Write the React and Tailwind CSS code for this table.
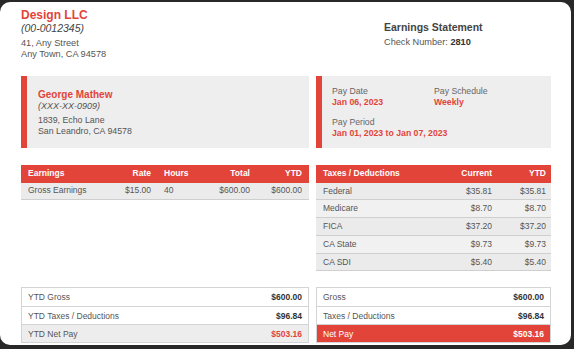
import React from 'react';

const earnings = [{ label: 'Gross Earnings', rate: '$15.00', hours: '40', total: '$600.00', ytd: '$600.00' }];

const taxes = [
  { label: 'Federal', current: '$35.81', ytd: '$35.81' },
  { label: 'Medicare', current: '$8.70', ytd: '$8.70' },
  { label: 'FICA', current: '$37.20', ytd: '$37.20' },
  { label: 'CA State', current: '$9.73', ytd: '$9.73' },
  { label: 'CA SDI', current: '$5.40', ytd: '$5.40' },
];

function SummaryRow({ label, value, variant }) {
  const rowCls =
    variant === 'red'
      ? 'bg-[#e2443a] text-white'
      : variant === 'gray'
      ? 'bg-[#ededed] text-[#555]'
      : 'bg-white text-[#555]';
  const valueCls =
    variant === 'red' ? 'text-white' : variant === 'gray' ? 'text-[#e2443a]' : 'text-[#333]';
  return (
    <div className={`flex items-center justify-between h-[18px] px-[6px] border-t border-[#d4d4d4] first:border-t-0 ${rowCls}`}>
      <span>{label}</span>
      <span className={`font-bold ${valueCls}`}>{value}</span>
    </div>
  );
}

export default function App() {
  return (
    <div className="w-[574px] h-[349px] bg-[#282828] pt-[2px] pr-[3px] pb-[4px] font-['Liberation_Sans',Arial,sans-serif] overflow-hidden">
      <div className="h-full bg-white rounded-[10px] pl-[21px] pr-[20px] pt-[6px] text-[#555]">
        {/* header */}
        <div className="flex justify-between">
          <div>
            <div className="text-[12px] leading-[14px] font-bold text-[#e2443a]">Design LLC</div>
            <div className="text-[10.5px] leading-[13px] italic text-[#444]">(00-0012345)</div>
            <div className="mt-[3px] text-[9.2px] leading-[11px] text-[#555]">
              <div>41, Any Street</div>
              <div>Any Town, CA 94578</div>
            </div>
          </div>
          <div className="w-[167px] pt-[13px]">
            <div className="text-[10.5px] leading-[13px] font-bold text-[#444]">Earnings Statement</div>
            <div className="mt-[3px] text-[9.2px] leading-[11px] text-[#555]">
              Check Number: <span className="font-bold text-[#333]">2810</span>
            </div>
          </div>
        </div>

        {/* info boxes */}
        <div className="flex gap-[7px] mt-[16px]">
          <div className="w-[288px] h-[72px] bg-[#eeeeee] border-l-[6px] border-[#e2443a] pl-[11px] pt-[13px]">
            <div className="text-[10px] leading-[12px] font-bold text-[#e2443a]">George Mathew</div>
            <div className="text-[9px] leading-[11px] italic text-[#555]">(XXX-XX-0909)</div>
            <div className="mt-[3px] text-[8.8px] leading-[10.5px] text-[#555]">
              <div>1839, Echo Lane</div>
              <div>San Leandro, CA 94578</div>
            </div>
          </div>
          <div className="w-[235px] h-[72px] bg-[#eeeeee] border-l-[6px] border-[#e2443a] pl-[10px] pt-[10px] text-[8.7px] leading-[11px]">
            <div className="flex">
              <div className="w-[102px]">
                <div className="text-[#666]">Pay Date</div>
                <div className="font-bold text-[#e2443a]">Jan 06, 2023</div>
              </div>
              <div>
                <div className="text-[#666]">Pay Schedule</div>
                <div className="font-bold text-[#e2443a]">Weekly</div>
              </div>
            </div>
            <div className="mt-[9px]">
              <div className="text-[#666]">Pay Period</div>
              <div className="font-bold text-[#e2443a]">Jan 01, 2023 to Jan 07, 2023</div>
            </div>
          </div>
        </div>

        {/* tables */}
        <div className="flex gap-[7px] mt-[17px] items-start text-[8.5px]">
          <div className="w-[288px]">
            <div className="grid grid-cols-[85px_52px_43px_56px_52px] h-[17.5px] items-center bg-[#e2443a] text-white font-bold">
              <span className="pl-[7px]">Earnings</span>
              <span className="text-right pr-[7px]">Rate</span>
              <span className="pl-[6px]">Hours</span>
              <span className="text-right pr-[7px]">Total</span>
              <span className="text-right pr-[7px]">YTD</span>
            </div>
            {earnings.map((r) => (
              <div key={r.label} className="grid grid-cols-[85px_52px_43px_56px_52px] h-[17.5px] items-center bg-[#ebebeb] border-b border-[#cfcfcf] text-[#555]">
                <span className="pl-[7px]">{r.label}</span>
                <span className="text-right pr-[7px]">{r.rate}</span>
                <span className="pl-[6px]">{r.hours}</span>
                <span className="text-right pr-[7px]">{r.total}</span>
                <span className="text-right pr-[7px]">{r.ytd}</span>
              </div>
            ))}
          </div>
          <div className="w-[235px]">
            <div className="grid grid-cols-[121px_60px_54px] h-[17.5px] items-center bg-[#e2443a] text-white font-bold">
              <span className="pl-[7px]">Taxes / Deductions</span>
              <span className="text-right pr-[5px]">Current</span>
              <span className="text-right pr-[5px]">YTD</span>
            </div>
            {taxes.map((r, i) => (
              <div
                key={r.label}
                className={`grid grid-cols-[121px_60px_54px] h-[17.8px] items-center border-b border-[#cfcfcf] text-[#555] ${i % 2 ? 'bg-[#f1f1f1]' : 'bg-[#ebebeb]'}`}
              >
                <span className="pl-[7px]">{r.label}</span>
                <span className="text-right pr-[5px]">{r.current}</span>
                <span className="text-right pr-[5px]">{r.ytd}</span>
              </div>
            ))}
          </div>
        </div>

        {/* summary */}
        <div className="flex gap-[7px] mt-[16px] text-[8.5px]">
          <div className="w-[288px] border border-[#d4d4d4]">
            <SummaryRow label="YTD Gross" value="$600.00" />
            <SummaryRow label="YTD Taxes / Deductions" value="$96.84" />
            <SummaryRow label="YTD Net Pay" value="$503.16" variant="gray" />
          </div>
          <div className="w-[235px] border border-[#d4d4d4]">
            <SummaryRow label="Gross" value="$600.00" />
            <SummaryRow label="Taxes / Deductions" value="$96.84" />
            <SummaryRow label="Net Pay" value="$503.16" variant="red" />
          </div>
        </div>
      </div>
    </div>
  );
}
